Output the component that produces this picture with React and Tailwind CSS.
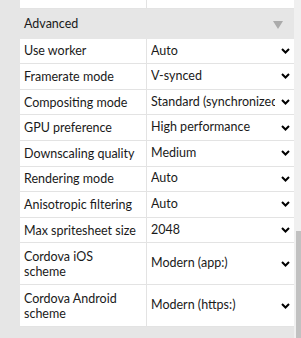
const rows = [
  { label: "Use worker", value: "Auto" },
  { label: "Framerate mode", value: "V-synced" },
  { label: "Compositing mode", value: "Standard (synchronized)" },
  { label: "GPU preference", value: "High performance" },
  { label: "Downscaling quality", value: "Medium" },
  { label: "Rendering mode", value: "Auto" },
  { label: "Anisotropic filtering", value: "Auto" },
  { label: "Max spritesheet size", value: "2048" },
  { label: ["Cordova iOS", "scheme"], value: "Modern (app:)", tall: true },
  { label: ["Cordova Android", "scheme"], value: "Modern (https:)", tall: true },
];

const Chevron = () => (
  <svg width="9" height="6" viewBox="0 0 9 6" className="shrink-0">
    <path d="M1 1 L4.5 4.5 L8 1" fill="none" stroke="#000" strokeWidth="2" />
  </svg>
);

const Row = ({ label, value, tall }) => (
  <div className={`flex border-b border-[#e3e3e3] bg-white ${tall ? "h-[42px]" : "h-[25.6px]"}`}>
    <div className="w-[127px] shrink-0 border-r border-[#e3e3e3] pl-[4px] flex flex-col justify-center whitespace-nowrap leading-[15px]">
      {Array.isArray(label) ? label.map((l) => <span key={l}>{l}</span>) : label}
    </div>
    <div className="flex-1 min-w-0 flex items-center pl-[4px] pr-[4px]">
      <span className="flex-1 min-w-0 mr-[6px] overflow-hidden whitespace-nowrap">{value}</span>
      <Chevron />
    </div>
  </div>
);

export default function App() {
  return (
    <div
      className="w-[301px] h-[338px] overflow-hidden flex bg-[#e6e6e6] text-[12.5px] text-[#1a1a1a]"
      style={{ fontFamily: 'Lato, sans-serif' }}
    >
      <div className="w-[294px] pl-[20px]">
        <div className="-mt-[17px]">
          <Row label="Z axis scale" value="Normalized" />
        </div>
        <div className="h-[30px] flex items-center justify-between pl-[4px] pr-[11px] pt-[2px] bg-[#e6e6e6]">
          <span>Advanced</span>
          <svg width="10" height="8" viewBox="0 0 10 8">
            <path d="M0 0 H10 L5 8 Z" fill="#ababab" />
          </svg>
        </div>
        {rows.map((r) => (
          <Row key={String(r.label)} {...r} />
        ))}
      </div>
      <div className="w-[7px] bg-[#f0f0f0] flex flex-col">
        <div className="h-[231px]" />
        <div className="flex-1 ml-[2px] bg-[#c1c1c1]" />
      </div>
    </div>
  );
}
